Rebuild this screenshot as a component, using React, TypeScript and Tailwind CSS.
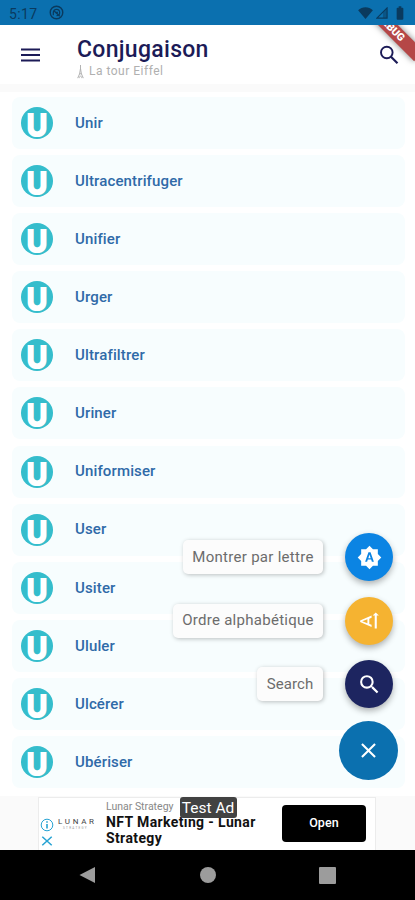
import React from "react";
import {
  MdBatteryFull,
  MdBrightnessAuto,
  MdClose,
  MdSearch,
  MdTextRotateUp,
} from "react-icons/md";

const verbs = [
  "Unir",
  "Ultracentrifuger",
  "Unifier",
  "Urger",
  "Ultrafiltrer",
  "Uriner",
  "Uniformiser",
  "User",
  "Usiter",
  "Ululer",
  "Ulcérer",
  "Ubériser",
];

const actions = [
  { label: "Montrer par lettre", width: "w-[140px]", color: "bg-[#0b84e3]", Icon: MdBrightnessAuto, tracking: "tracking-[0.28px]" },
  { label: "Ordre alphabétique", width: "w-[150px]", color: "bg-[#f5b331]", Icon: MdTextRotateUp, tracking: "tracking-[0.28px]" },
  { label: "Search", width: "w-[66px]", color: "bg-[#1d2560]", Icon: MdSearch, tracking: "tracking-[0.1px]" },
];

function StatusBar() {
  return (
    <div className="flex h-[25px] shrink-0 items-center bg-[#0b70af] pr-[7px] pl-[9px] text-[#0a3a5e]">
      <span className="pt-[2px] text-[14px] leading-none tracking-[0.4px]">5:17</span>
      <svg viewBox="0 0 16 16" className="ml-[11px] h-[15px] w-[15px]" fill="none" stroke="currentColor">
        <circle cx="8" cy="8" r="6.7" strokeWidth="1.5" />
        <path d="M4.6 11V8a3.4 3.4 0 1 1 3.4 3.4" strokeWidth="1.3" />
        <path d="M5.5 6.5 11.5 12M7 8h2.5" strokeWidth="1.4" />
      </svg>
      <div className="ml-auto flex items-center">
        <svg viewBox="0 0 16 13" className="h-[12px] w-[15px]" fill="currentColor">
          <path d="M8 13 0 3.4C4.5-.8 11.5-.8 16 3.4z" />
        </svg>
        <svg viewBox="0 0 13 13" className="ml-[3px] h-[12px] w-[12px]">
          <path d="M12 1v11H1z" fill="none" stroke="currentColor" strokeWidth="1.2" />
          <path d="M7.5 5.5 12 1v11H7.5z" fill="currentColor" opacity=".5" />
        </svg>
        <MdBatteryFull className="ml-[4px] h-[16px] w-[16px]" />
      </div>
    </div>
  );
}

function Header() {
  return (
    <header className="relative flex h-[59px] shrink-0 items-center overflow-hidden bg-white pl-[21px] text-[#1c1b57]">
      <svg viewBox="0 0 19 14" className="mt-[1px] h-[14px] w-[19px]" stroke="currentColor" strokeWidth="2">
        <path d="M0 1.5h19M0 7h19M0 12.5h19" />
      </svg>
      <div className="mt-[8px] ml-[37px] flex flex-col">
        <h1 className="text-[23px] leading-[26px] font-medium tracking-[0.3px]">Conjugaison</h1>
        <div className="flex items-center text-[#b0b0b0]">
          <svg viewBox="0 0 8 16" className="h-[14px] w-[7px]" fill="none" stroke="currentColor">
            <path d="M4 0v5M4 4 3 10 .8 15M4 4l1 6 2.2 5M2.5 10h3M2.5 15c0-3 3-3 3 0" strokeWidth="1.1" />
          </svg>
          <span className="ml-[5px] text-[12px] leading-[17px] tracking-[0.5px]">La tour Eiffel</span>
        </div>
      </div>
      <svg viewBox="0 0 20 20" className="mt-[1px] mr-[16px] ml-auto h-[20px] w-[20px]" fill="none" stroke="currentColor">
        <circle cx="7.8" cy="7.5" r="5.8" strokeWidth="1.9" />
        <path d="m12 11.7 6.5 6.5" strokeWidth="2.2" />
      </svg>
      <div className="absolute top-[-4px] left-[351px] flex h-[13.5px] w-[80px] rotate-45 items-center justify-center bg-[#b54747] text-[10.5px] font-black text-white shadow-[0_0_6px_rgba(0,0,0,0.5)]">
        DEBUG
      </div>
    </header>
  );
}

function VerbRow({ verb }: { verb: string }) {
  return (
    <li className="flex h-[52px] shrink-0 items-center rounded-[8px] bg-[#f7fdfe] pl-[9.4px]">
      <span className="flex h-[32px] w-[32px] items-start justify-center overflow-hidden rounded-full bg-[#35bdcc] font-[Inter,sans-serif] text-[33px] leading-[36px] font-black text-white">
        <span className="scale-x-[0.9]">U</span>
      </span>
      <span className="ml-[21.6px] text-[15px] font-medium tracking-[0.14px] text-[#2f6aa8]">{verb}</span>
    </li>
  );
}

function SpeedDial() {
  return (
    <div className="absolute right-[17px] bottom-[120.5px] flex flex-col items-end">
      <div className="mr-[5px] mb-[12.5px] flex flex-col items-end gap-[15.5px]">
        {actions.map(({ label, width, color, Icon, tracking }) => (
          <div key={label} className="flex items-center">
            <span
              className={`flex h-[34px] items-center justify-center rounded-[5px] bg-[#fcfcfc] text-[15px] whitespace-nowrap text-[#6c6c6c] shadow-[1px_1px_4px_rgba(0,0,0,0.25)] ${width} ${tracking}`}
            >
              {label}
            </span>
            <span
              className={`ml-[22px] flex h-[48px] w-[48px] items-center justify-center rounded-full text-white shadow-[0_3px_6px_rgba(0,0,0,0.3)] ${color}`}
            >
              <Icon className="h-[25px] w-[25px]" />
            </span>
          </div>
        ))}
      </div>
      <button className="flex h-[59px] w-[59px] items-center justify-center rounded-full bg-[#0b70af] text-white">
        <MdClose className="h-[25px] w-[25px]" />
      </button>
    </div>
  );
}

function AdBanner() {
  return (
    <div className="flex h-[54px] shrink-0 justify-center bg-[#fafafa] pt-[1px] pr-[1px]">
      <div className="relative flex h-[53px] w-[338px] border border-b-0 border-[#ececec] bg-white">
        <div className="flex w-[16px] flex-col items-center pt-[20px] text-[#27a3d3]">
          <svg viewBox="0 0 14 14" className="h-[14px] w-[14px]" fill="none" stroke="currentColor">
            <circle cx="7" cy="7" r="5.8" />
            <path d="M7 6v4.5M7 3.3v1.5" strokeWidth="1.6" />
          </svg>
          <svg viewBox="0 0 14 14" className="mt-[3px] h-[12px] w-[12px]" fill="none" stroke="currentColor">
            <path d="m1.5 2 11 10M12.5 2l-11 10" strokeWidth="1.8" />
          </svg>
        </div>
        <div className="ml-[3px] flex w-[38px] flex-col pt-[20px] text-[#444]">
          <span className="text-[8px] leading-[8px] tracking-[2.7px]">LUNAR</span>
          <span className="ml-[5px] text-[3px] leading-[4px] tracking-[1.3px] text-[#999]">STRATEGY</span>
        </div>
        <div className="ml-[10px] w-[165px] pt-[2px]">
          <p className="text-[10.5px] leading-[14px] text-[#888]">Lunar Strategy</p>
          <p className="text-[14px] leading-[16px] font-bold tracking-[0.38px] text-[#111]">NFT Marketing - Lunar Strategy</p>
        </div>
        <button className="absolute top-[7px] left-[243px] h-[37px] w-[84px] rounded-[4px] bg-black text-[12.5px] font-medium tracking-[0.1px] text-white">
          Open
        </button>
        <span className="absolute top-[-1px] left-[140.5px] flex h-[21px] w-[57px] items-center justify-center rounded-[3px] bg-[#424242] pt-[2px] text-[15.5px] whitespace-nowrap text-white">
          Test Ad
        </span>
      </div>
    </div>
  );
}

function NavBar() {
  return (
    <nav className="flex h-[50px] shrink-0 items-center bg-black pl-[79px] text-[#9c9c9c]">
      <svg viewBox="0 0 16 18" className="h-[18px] w-[17px]" fill="currentColor">
        <path d="M15.5 1v16L0 9z" />
      </svg>
      <span className="ml-[104px] h-[16px] w-[16px] rounded-full bg-[#9c9c9c]" />
      <span className="ml-[103px] h-[17px] w-[17px] rounded-[1px] bg-[#9c9c9c]" />
    </nav>
  );
}

export default function App() {
  return (
    <div className="relative flex h-[900px] w-[415px] flex-col overflow-hidden bg-white font-[Roboto,sans-serif]">
      <StatusBar />
      <Header />
      <div className="h-[8px] shrink-0 bg-[#fafafa]" />
      <ul className="flex h-[704px] shrink-0 flex-col gap-[6.1px] overflow-hidden pt-[5px] pr-[10px] pl-[12px]">
        {verbs.map((verb) => (
          <VerbRow key={verb} verb={verb} />
        ))}
      </ul>
      <AdBanner />
      <NavBar />
      <SpeedDial />
    </div>
  );
}
